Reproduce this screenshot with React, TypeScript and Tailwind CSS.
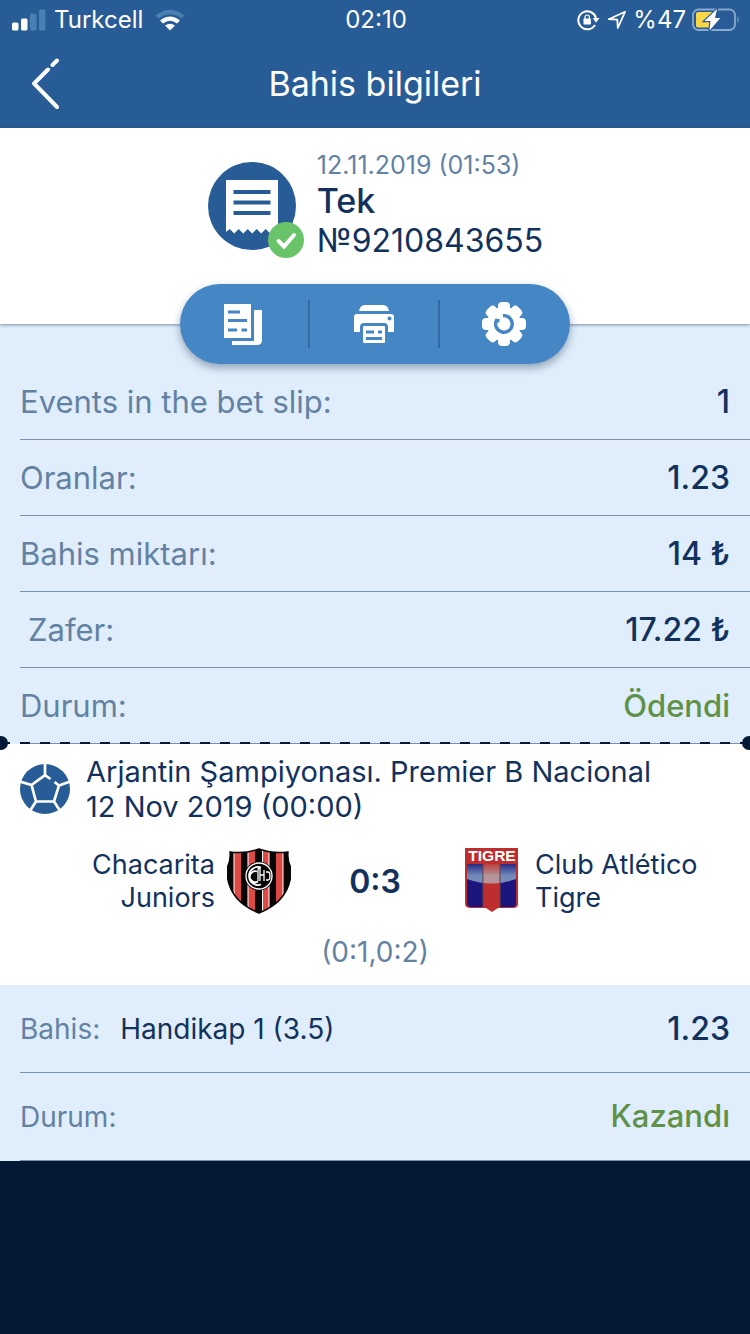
import React from "react";

const rows = [
  { label: "Events in the bet slip:", value: "1" },
  { label: "Oranlar:", value: "1.23" },
  { label: "Bahis miktarı:", value: "14 ₺" },
  { label: "Zafer:", value: "17.22 ₺", inset: true },
  { label: "Durum:", value: "Ödendi", success: true },
];

function SignalIcon() {
  return (
    <svg width="34" height="22" viewBox="0 0 34 22" fill="#fff" aria-hidden="true">
      <rect x="0" y="13.500" width="6.500" height="8" rx="1.500" />
      <rect x="9" y="9.500" width="6.500" height="12" rx="1.500" />
      <rect x="18" y="4.500" width="6.500" height="17" rx="1.500" fill="#4a7fb1" />
      <rect x="27" y="0.500" width="6.500" height="21" rx="1.500" fill="#4a7fb1" />
    </svg>
  );
}

function WifiIcon() {
  return (
    <svg width="30" height="22" viewBox="0 0 30 22" aria-hidden="true">
      <path d="M0.500 6.500Q15-5 29.500 6.500L26.500 9.500Q15 1 3.500 9.500Z" fill="#4a7fb1" />
      <path d="M5 11.500Q15 3.500 25 11.500L22 14.500Q15 9 8 14.500Z" fill="#fff" />
      <path d="M10 16.500Q15 13 20 16.500L15 21.500Z" fill="#fff" />
    </svg>
  );
}

function LockRotationIcon() {
  return (
    <svg width="24" height="22" viewBox="0 0 24 22" fill="none" aria-hidden="true">
      <path d="M18 16A9 9 0 1 1 19 9" stroke="#fff" strokeWidth="2" />
      <path d="M15.800 9H22.500L19 13.800Z" fill="#fff" />
      <rect x="6.500" y="9.500" width="7.400" height="6" rx="0.800" fill="#fff" />
      <path d="M8 10V8.200a2.200 2.200 0 0 1 4.400 0V10" stroke="#fff" strokeWidth="1.200" />
    </svg>
  );
}

function LocationIcon() {
  return (
    <svg width="20" height="20" viewBox="0 0 20 20" fill="none" aria-hidden="true">
      <path d="M1.800 9.200 18 1.800 10.800 18 10.300 9.600Z" stroke="#fff" strokeWidth="1.800" strokeLinejoin="round" />
    </svg>
  );
}

function BatteryIcon() {
  return (
    <svg width="48" height="24" viewBox="0 0 48 24" fill="none" aria-hidden="true">
      <rect x="1" y="1.500" width="42" height="20.500" rx="5.500" stroke="#8aa8c9" strokeWidth="1.800" />
      <path d="M45.500 8.500Q48 11.500 45.500 15Z" fill="#8aa8c9" />
      <path d="M6 4H20V19.500H6Q4 19.500 4 17.500V6Q4 4 6 4Z" fill="#f9d548" />
      <path d="M25 1 12.500 13H18.500L17.500 22.500 28.500 10H23Z" fill="#fff" stroke="#285c96" strokeWidth="2.400" paintOrder="stroke" />
    </svg>
  );
}

function TicketIcon() {
  return (
    <svg width="98" height="98" viewBox="0 0 98 98" aria-hidden="true">
      <circle cx="45" cy="45" r="44" fill="#285c96" />
      <path d="M19 19H71V71L67.700 68 63.200 72.500 58.700 68 54.200 72.500 49.700 68 45.200 72.500 40.700 68 36.200 72.500 31.700 68 27.200 72.500 22.700 68 19 71Z" fill="#fff" />
      <path d="M26.500 31H63.500M26.500 41.500H63.500M26.500 52H63.500" stroke="#285c96" strokeWidth="4" />
      <circle cx="79" cy="79" r="18" fill="#69c368" />
      <path d="M71.500 80 77 85.500 87 74" fill="none" stroke="#fff" strokeWidth="4" strokeLinecap="round" />
    </svg>
  );
}

function CopyIcon() {
  return (
    <svg width="40" height="42" viewBox="0 0 40 42" aria-hidden="true">
      <path fill="#fff" d="M1 1H28V35H1Z" />
      <path fill="#fff" d="M31 7H39V37Q39 42 34 42H9V38H31Z" />
      <path d="M5 9H17M5 17.500H24M5 27H14M18.500 27H24" stroke="#4587c5" strokeWidth="3" />
    </svg>
  );
}

function PrinterIcon() {
  return (
    <svg width="42" height="40" viewBox="0 1 42 40" aria-hidden="true">
      <path fill="#fff" d="M6 8Q7 2 12 2H30Q35 2 36 8ZM4 11H38Q41 11 41 14V29H35V24Q35 20 31 20H11Q7 20 7 24V29H1V14Q1 11 4 11Z" />
      <rect x="10" y="23" width="22" height="17" rx="1" fill="#fff" />
      <circle cx="36.500" cy="15.500" r="2" fill="#4587c5" />
      <path d="M13 29H21M25 29H29M13 35.500H29" stroke="#4587c5" strokeWidth="3" />
    </svg>
  );
}

function GearIcon() {
  return (
    <svg width="46" height="46" viewBox="-23 -23 46 46" aria-hidden="true">
      <g fill="#fff">
        <circle r="17" />
        {[0, 45, 90, 135].map((angle) => (
          <rect key={angle} x="-6" y="-22" width="12" height="44" rx="4" transform={`rotate(${angle})`} />
        ))}
      </g>
      <path d="M-1-8.300A8.300 8.300 0 1 1-7.600-3.500L-4.500-3" fill="none" stroke="#4587c5" strokeWidth="3.400" />
    </svg>
  );
}

function BallIcon() {
  return (
    <svg width="50" height="50" viewBox="0 0 50 50" fill="none" className="shrink-0" aria-hidden="true">
      <circle cx="25" cy="25" r="25" fill="#285c96" />
      <path d="M30.500 15 25 11.200 11.500 21 16 37.500H34L39 21.500 34.500 18M25 11V0M11.500 21 0 17.500M39 21.500 50 17.500M16 37.500 10.500 46M34 37.500 39.500 46" stroke="#fff" strokeWidth="2.700" />
    </svg>
  );
}

function ChacaritaCrest() {
  return (
    <svg width="64" height="66" viewBox="0 0 64 66" className="shrink-0" aria-hidden="true">
      <defs>
        <clipPath id="chacarita-shield">
          <path d="M3 4Q18 6 32 1Q46 6 61 4Q60 12 64 20Q65 52 32 65Q-1 52 0 20Q4 12 3 4Z" />
        </clipPath>
      </defs>
      <g clipPath="url(#chacarita-shield)">
        <path d="M0 0H64V66H0Z" fill="#080607" />
        <path d="M7 0H14V66H7ZM21 0H28V66H21ZM35 0H42V66H35ZM49 0H56V66H49Z" fill="#dd4a45" />
        <path d="M7 0V66M21 0V66M35.500 0V66M42 0V66M56 0V66" stroke="#fff" strokeWidth="1" />
      </g>
      <path d="M3 4Q18 6 32 1Q46 6 61 4Q60 12 64 20Q65 52 32 65Q-1 52 0 20Q4 12 3 4Z" fill="none" stroke="#080607" strokeWidth="1.500" />
      <circle cx="32" cy="28" r="14.500" fill="#080607" />
      <g fill="none" stroke="#fff">
        <circle cx="32" cy="28" r="13" strokeWidth="1.300" />
        <path d="M34 19.500A9 9 0 1 0 34 36.500M30 23.500A5.500 5.500 0 1 0 31 33.500" strokeWidth="1.800" />
        <path d="M31 33V22Q31 20 33 20V33M33 27H37M37 22V33M39 24H41Q43 24 43 28T41 32H39" strokeWidth="1.300" />
      </g>
    </svg>
  );
}

function TigreCrest() {
  return (
    <svg width="54" height="66" viewBox="0 0 54 66" className="shrink-0" aria-hidden="true">
      <defs>
        <linearGradient id="tigre-shine" x1="0" y1="0" x2="0" y2="1">
          <stop offset="0" stopColor="#9fd6dd" stopOpacity="0.100" />
          <stop offset="0.600" stopColor="#a9dbe0" stopOpacity="0.600" />
          <stop offset="1" stopColor="#b9d6de" stopOpacity="0.600" />
        </linearGradient>
      </defs>
      <path d="M0 0H53V56Q53 60 48 60H33L27 64 21 60H6Q0 60 0 56Z" fill="#bf2e2e" />
      <path d="M2 16H18V59H6Q2 59 2 55ZM35 16H51V55Q51 59 48 59H35Z" fill="#1b167e" />
      <path d="M2 16H51V31Q27 40 2 31Z" fill="url(#tigre-shine)" />
      <path d="M18 16V59M35 16V59" stroke="#6b4143" strokeWidth="1" />
      <text x="27" y="13" textAnchor="middle" fill="#fff" fontSize="15.500" fontWeight="700" fontFamily="Liberation Sans, sans-serif">TIGRE</text>
    </svg>
  );
}

export default function App() {
  return (
    <div className="min-h-screen bg-[#041936] font-['Inter','Noto_Sans',sans-serif] text-[#12325d]">
      <header className="h-32 bg-[#285c96] text-white">
        <div className="grid h-10 grid-cols-3 items-center pr-2.5 pl-3 text-2xl leading-10">
          <div className="flex items-center gap-2 whitespace-nowrap">
            <SignalIcon />
            <span className="pr-1">Turkcell</span>
            <WifiIcon />
          </div>
          <time className="text-center">02:10</time>
          <div className="flex items-center justify-end gap-1.5">
            <LockRotationIcon />
            <LocationIcon />
            <span>%47</span>
            <BatteryIcon />
          </div>
        </div>
        <div className="grid h-22 grid-cols-[64px_1fr_64px] items-center">
          <button type="button" aria-label="Geri" className="flex h-full items-center pl-8">
            <svg width="28" height="52" viewBox="0 0 28 52" fill="none" aria-hidden="true">
              <path d="M16 11.500 2 25.500 25 49M20.500 7 25 2.500" stroke="#fff" strokeWidth="4" strokeLinecap="round" />
            </svg>
          </button>
          <h1 className="text-center text-[34px] leading-10">Bahis bilgileri</h1>
        </div>
      </header>

      <main>
        <section className="relative flex h-49 justify-center gap-3 bg-white pt-[21px] shadow-[0_1px_3px_rgba(20,50,80,0.500)]">
          <div className="pt-3"><TicketIcon /></div>
          <div>
            <time className="block text-[25px] leading-8 text-[#6382a3]">12.11.2019 (01:53)</time>
            <h2 className="text-[34px] leading-10 font-medium">Tek</h2>
            <p className="text-[32px] leading-10">№9210843655</p>
          </div>
        </section>

        <nav className="relative z-10 mx-auto -mt-10 grid h-20 w-[52%] grid-cols-3 items-center rounded-full bg-[#4587c5] shadow-[0_4px_8px_rgba(20,50,80,0.400)]">
          <button type="button" aria-label="Kopyala" className="flex h-12 items-center justify-center border-r-2 border-[#3569a3] pr-0.5"><CopyIcon /></button>
          <button type="button" aria-label="Yazdır" className="flex h-12 items-center justify-center border-r-2 border-[#3569a3]"><PrinterIcon /></button>
          <button type="button" aria-label="Ayarlar" className="flex h-12 items-center justify-center pr-0.5"><GearIcon /></button>
        </nav>

        <dl className="-mt-10 bg-[#e0eefb] pt-10 pl-5">
          {rows.map((row) => (
            <div key={row.label} className="flex h-19 items-center justify-between border-b border-[#7592ae] pr-5 text-[31px] leading-10">
              <dt className={row.inset ? "pl-2 text-[#6382a3]" : "text-[#6382a3]"}>{row.label}</dt>
              <dd className={row.success ? "font-medium text-[#5f9149]" : "text-[32px] font-medium"}>{row.value}</dd>
            </div>
          ))}
        </dl>

        <section className="relative h-[241px] overflow-x-clip bg-white px-5 pt-2.5">
          <div className="absolute inset-x-0 -top-2 flex h-3.5 items-center" aria-hidden="true">
            <span className="-ml-1.5 size-3.5 shrink-0 rounded-full bg-[#041936]" />
            <span className="absolute inset-x-0 h-0.5 bg-[repeating-linear-gradient(90deg,#041936_0_10px,transparent_10px_20px)]" />
            <span className="-mr-1.5 ml-auto size-3.5 shrink-0 rounded-full bg-[#041936]" />
          </div>
          <div className="flex items-center gap-4">
            <BallIcon />
            <div className="text-[29px] leading-[35px]">
              <h3>Arjantin Şampiyonası. Premier B Nacional</h3>
              <time>12 Nov 2019 (00:00)</time>
            </div>
          </div>
          <div className="mt-6 grid grid-cols-[1fr_168px_1fr] items-center text-[27px] leading-[33px]">
            <div className="flex items-center justify-end gap-3 text-right">
              <span>Chacarita<br />Juniors</span>
              <ChacaritaCrest />
            </div>
            <strong className="text-center text-[32px] font-semibold">0:3</strong>
            <div className="flex items-center gap-4 pl-1.5">
              <TigreCrest />
              <span>Club Atlético<br />Tigre</span>
            </div>
          </div>
          <p className="mt-5 text-center text-[28px] leading-9 text-[#6382a3]">(0:1,0:2)</p>
        </section>

        <dl className="bg-[#e0eefb] pl-5">
          <div className="flex h-22 items-center border-b border-[#7592ae] pr-5">
            <dt className="text-[28px] text-[#6382a3]">Bahis:</dt>
            <dd className="flex flex-1 items-center justify-between pl-5">
              <span className="text-[28px]">Handikap 1 (3.5)</span>
              <span className="text-[32px] font-medium">1.23</span>
            </dd>
          </div>
          <div className="flex h-22 items-center justify-between border-b border-[#7592ae] pr-5">
            <dt className="text-[28px] text-[#6382a3]">Durum:</dt>
            <dd className="text-[31px] font-medium text-[#5f9149]">Kazandı</dd>
          </div>
        </dl>
      </main>
    </div>
  );
}
